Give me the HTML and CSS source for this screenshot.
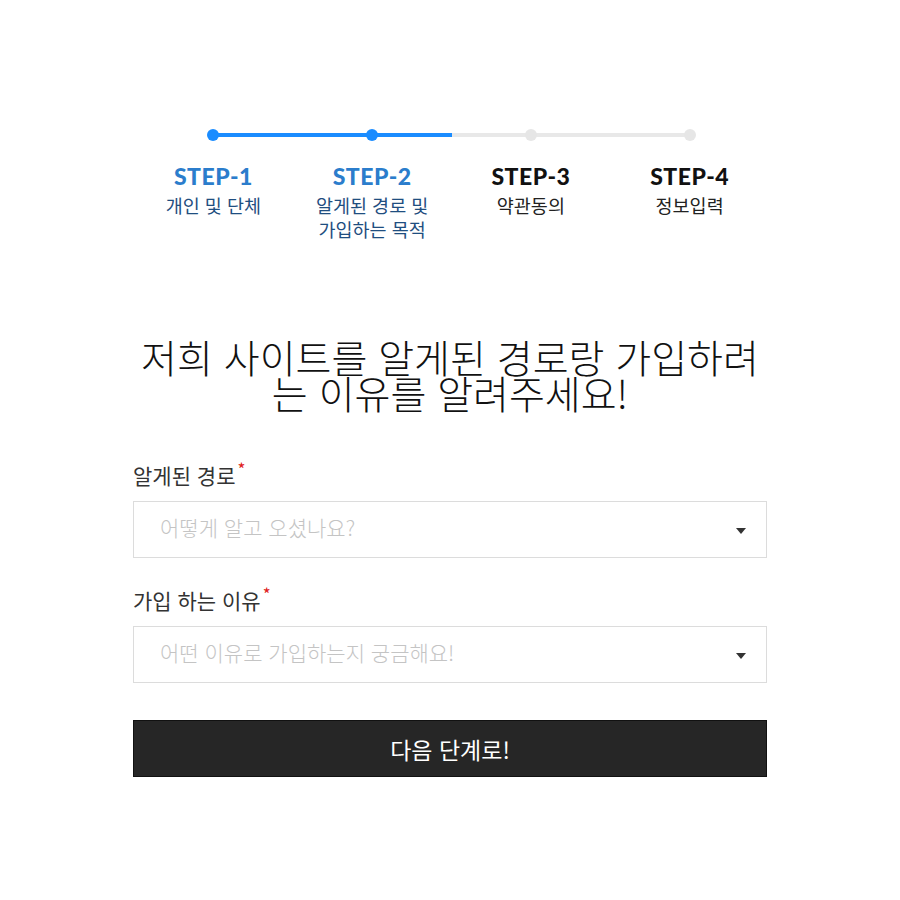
FILE: index.html
```html
<!DOCTYPE html>
<html lang="ko">
<head>
<meta charset="utf-8">
<title>회원가입 - 가입 경로</title>
<link rel="stylesheet" href="styles.css">
</head>
<body>
<div class="page">
  <ol class="stepper">
    <li class="step done first">
      <span class="track"><span class="half left"></span><span class="half right"></span><span class="dot"></span></span>
      <span class="step-title">STEP-1</span>
      <span class="step-desc">개인 및 단체</span>
    </li>
    <li class="step done current">
      <span class="track"><span class="half left"></span><span class="half right"></span><span class="dot"></span></span>
      <span class="step-title">STEP-2</span>
      <span class="step-desc">알게된 경로 및<br>가입하는 목적</span>
    </li>
    <li class="step">
      <span class="track"><span class="half left"></span><span class="half right"></span><span class="dot"></span></span>
      <span class="step-title">STEP-3</span>
      <span class="step-desc">약관동의</span>
    </li>
    <li class="step last">
      <span class="track"><span class="half left"></span><span class="half right"></span><span class="dot"></span></span>
      <span class="step-title">STEP-4</span>
      <span class="step-desc">정보입력</span>
    </li>
  </ol>

  <h1 class="headline">저희 사이트를 알게된 경로랑 가입하려는 이유를 알려주세요!</h1>

  <form class="form">
    <div class="field">
      <label class="field-label">알게된 경로<span class="req">*</span></label>
      <div class="select">
        <span class="placeholder">어떻게 알고 오셨나요?</span>
        <span class="caret"></span>
      </div>
    </div>
    <div class="field">
      <label class="field-label">가입 하는 이유<span class="req">*</span></label>
      <div class="select">
        <span class="placeholder">어떤 이유로 가입하는지 궁금해요!</span>
        <span class="caret"></span>
      </div>
    </div>
    <button type="button" class="next-btn">다음 단계로!</button>
  </form>
</div>
</body>
</html>
```

FILE: styles.css
```css
* { box-sizing: border-box; }

body {
  margin: 0;
  background: #fff;
  font-family: "Noto Sans CJK KR", "Noto Sans", sans-serif;
  color: #222;
}

.page {
  width: 634px;
  margin: 0 auto;
  padding-top: 128px;
}

/* progress stepper */
.stepper {
  list-style: none;
  margin: 0 -2px 0 1px;
  padding: 0;
  display: grid;
  grid-template-columns: repeat(4, 1fr);
}

.step {
  display: flex;
  flex-direction: column;
  align-items: center;
  text-align: center;
}

.track {
  position: relative;
  display: flex;
  width: 100%;
  height: 14px;
  align-items: center;
}

.half {
  flex: 1;
  height: 4px;
  background: #e8e8e8;
}
.step.done .half { background: #1a8cff; }
.step.first .half.left,
.step.last .half.right { visibility: hidden; }

.dot {
  position: absolute;
  left: 50%;
  top: 50%;
  width: 12px;
  height: 12px;
  margin: -6px 0 0 -6px;
  border-radius: 50%;
  background: #e6e6e6;
}
.step.done .dot { background: #1a8cff; }

.step-title {
  margin-top: 21px;
  font-family: Lato, "Noto Sans", sans-serif;
  font-weight: 900;
  font-size: 23px;
  line-height: 26px;
  color: #111;
  letter-spacing: 0.5px;
}
.step.done .step-title { color: #2b7dcc; }

.step-desc {
  margin-top: 4px;
  font-size: 18.5px;
  line-height: 24px;
  font-weight: 400;
  color: #222;
  white-space: nowrap;
}
.step.done .step-desc { color: #1f4e80; }

/* heading */
.headline {
  margin: 97px 0 0;
  text-align: center;
  font-weight: 300;
  font-size: 39px;
  line-height: 36px;
  color: #111;
}

/* form */
.form {
  margin-top: 52px;
}

.field {
  margin-bottom: 29px;
}

.field-label {
  display: block;
  height: 26px;
  font-size: 21px;
  line-height: 26px;
  color: #333;
  margin-bottom: 13px;
}

.req {
  color: #e02020;
  font-size: 17px;
  line-height: 0;
  vertical-align: 8px;
  margin-left: 2px;
}

.select {
  display: flex;
  align-items: center;
  justify-content: space-between;
  height: 57px;
  border: 1px solid #dcdcdc;
  padding: 0 20px 0 26px;
}

.placeholder {
  font-size: 21px;
  color: #c4c4c4;
  font-weight: 300;
  margin-top: -6px;
}

.caret {
  width: 0;
  height: 0;
  border-left: 5.5px solid transparent;
  border-right: 5.5px solid transparent;
  border-top: 6px solid #333;
  margin-top: 2px;
}

.next-btn {
  display: block;
  width: 100%;
  height: 57px;
  margin-top: 37px;
  border: 1px solid #111;
  background: #262626;
  color: #fff;
  font-family: inherit;
  font-size: 23px;
  font-weight: 400;
  cursor: pointer;
}
```
